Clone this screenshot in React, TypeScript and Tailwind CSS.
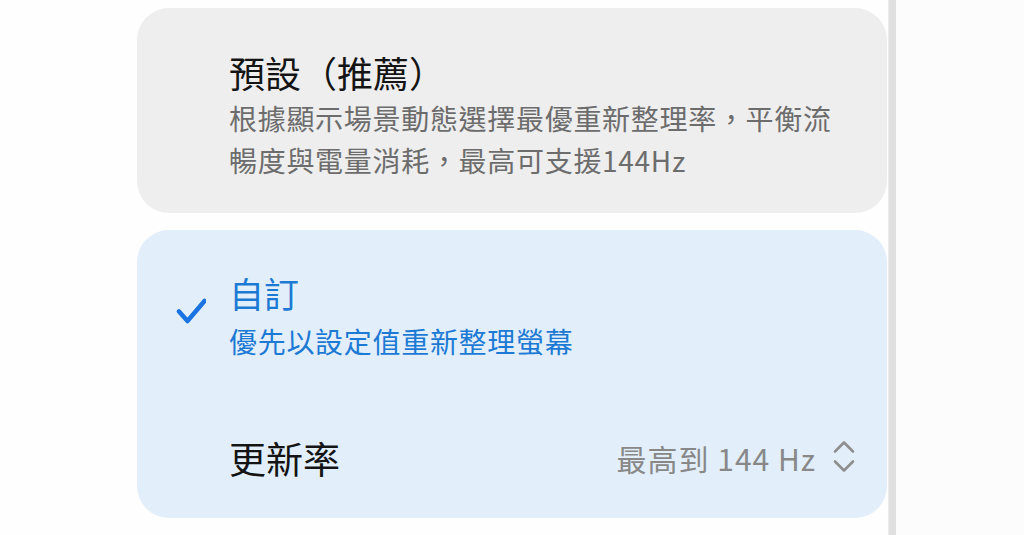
import React from 'react';

const font = { fontFamily: '"Noto Sans CJK TC", "Noto Sans", sans-serif' };

const CheckIcon = () => (
  <svg width="30" height="28" viewBox="0 0 30 28" className="shrink-0 mt-[27px]">
    <path d="M3 13.5 L11.5 23 L28.5 3" fill="none" stroke="#1a73e0" strokeWidth="4.5" strokeLinecap="round" strokeLinejoin="round" />
  </svg>
);

const UpDownIcon = () => (
  <svg width="24" height="36" viewBox="0 0 24 36" className="shrink-0">
    <path d="M3 11.5 L12 2.5 L21 11.5" fill="none" stroke="#8e8e8e" strokeWidth="2.6" strokeLinecap="round" strokeLinejoin="round" />
    <path d="M3 21.5 L12 30.5 L21 21.5" fill="none" stroke="#8e8e8e" strokeWidth="2.6" strokeLinecap="round" strokeLinejoin="round" />
  </svg>
);

export default function App() {
  return (
    <div className="flex w-[1024px] h-[535px] overflow-hidden bg-[#fefefe]" style={font}>
      <div className="w-[888px] pl-[137px] pr-[1px] pt-[8px] flex flex-col gap-[17px]">
        {/* default option */}
        <div className="w-[750px] h-[205px] rounded-[32px] bg-[#eeeeee] pl-[92px] pt-[42px]">
          <div className="text-[36px] leading-[44px] text-[#141414]">預設（推薦）</div>
          <div className="mt-[3px] text-[28px] leading-[42px] tracking-[0.7px] text-[#6c6c6c] w-[620px]">
            根據顯示場景動態選擇最優重新整理率，平衡流暢度與電量消耗，最高可支援144Hz
          </div>
        </div>

        {/* custom option */}
        <div className="w-[750px] h-[288px] rounded-[32px] bg-[#e2effb] pt-[41px] flex flex-col">
          <div className="flex items-start pl-[39px] gap-[23px]">
            <CheckIcon />
            <div>
              <div className="text-[35px] leading-[44px] text-[#1c7ad4]">自訂</div>
              <div className="mt-[5px] text-[28px] leading-[42px] tracking-[0.7px] text-[#1c7ad4]">優先以設定值重新整理螢幕</div>
            </div>
          </div>
          <div className="mt-[66px] h-[60px] flex items-center justify-between pl-[92px] pr-[31px]">
            <div className="text-[37px] leading-[44px] text-[#141414]">更新率</div>
            <div className="flex items-center gap-[16px]">
              <span className="text-[30px] leading-[40px] tracking-[1px] text-[#888888]">最高到 144 Hz</span>
              <UpDownIcon />
            </div>
          </div>
        </div>
      </div>
      <div className="w-[8px] h-full bg-[#e0e0e0] border-l border-[#ebebeb]" />
      <div className="flex-1 h-full bg-[#fcfcfc]" />
    </div>
  );
}
